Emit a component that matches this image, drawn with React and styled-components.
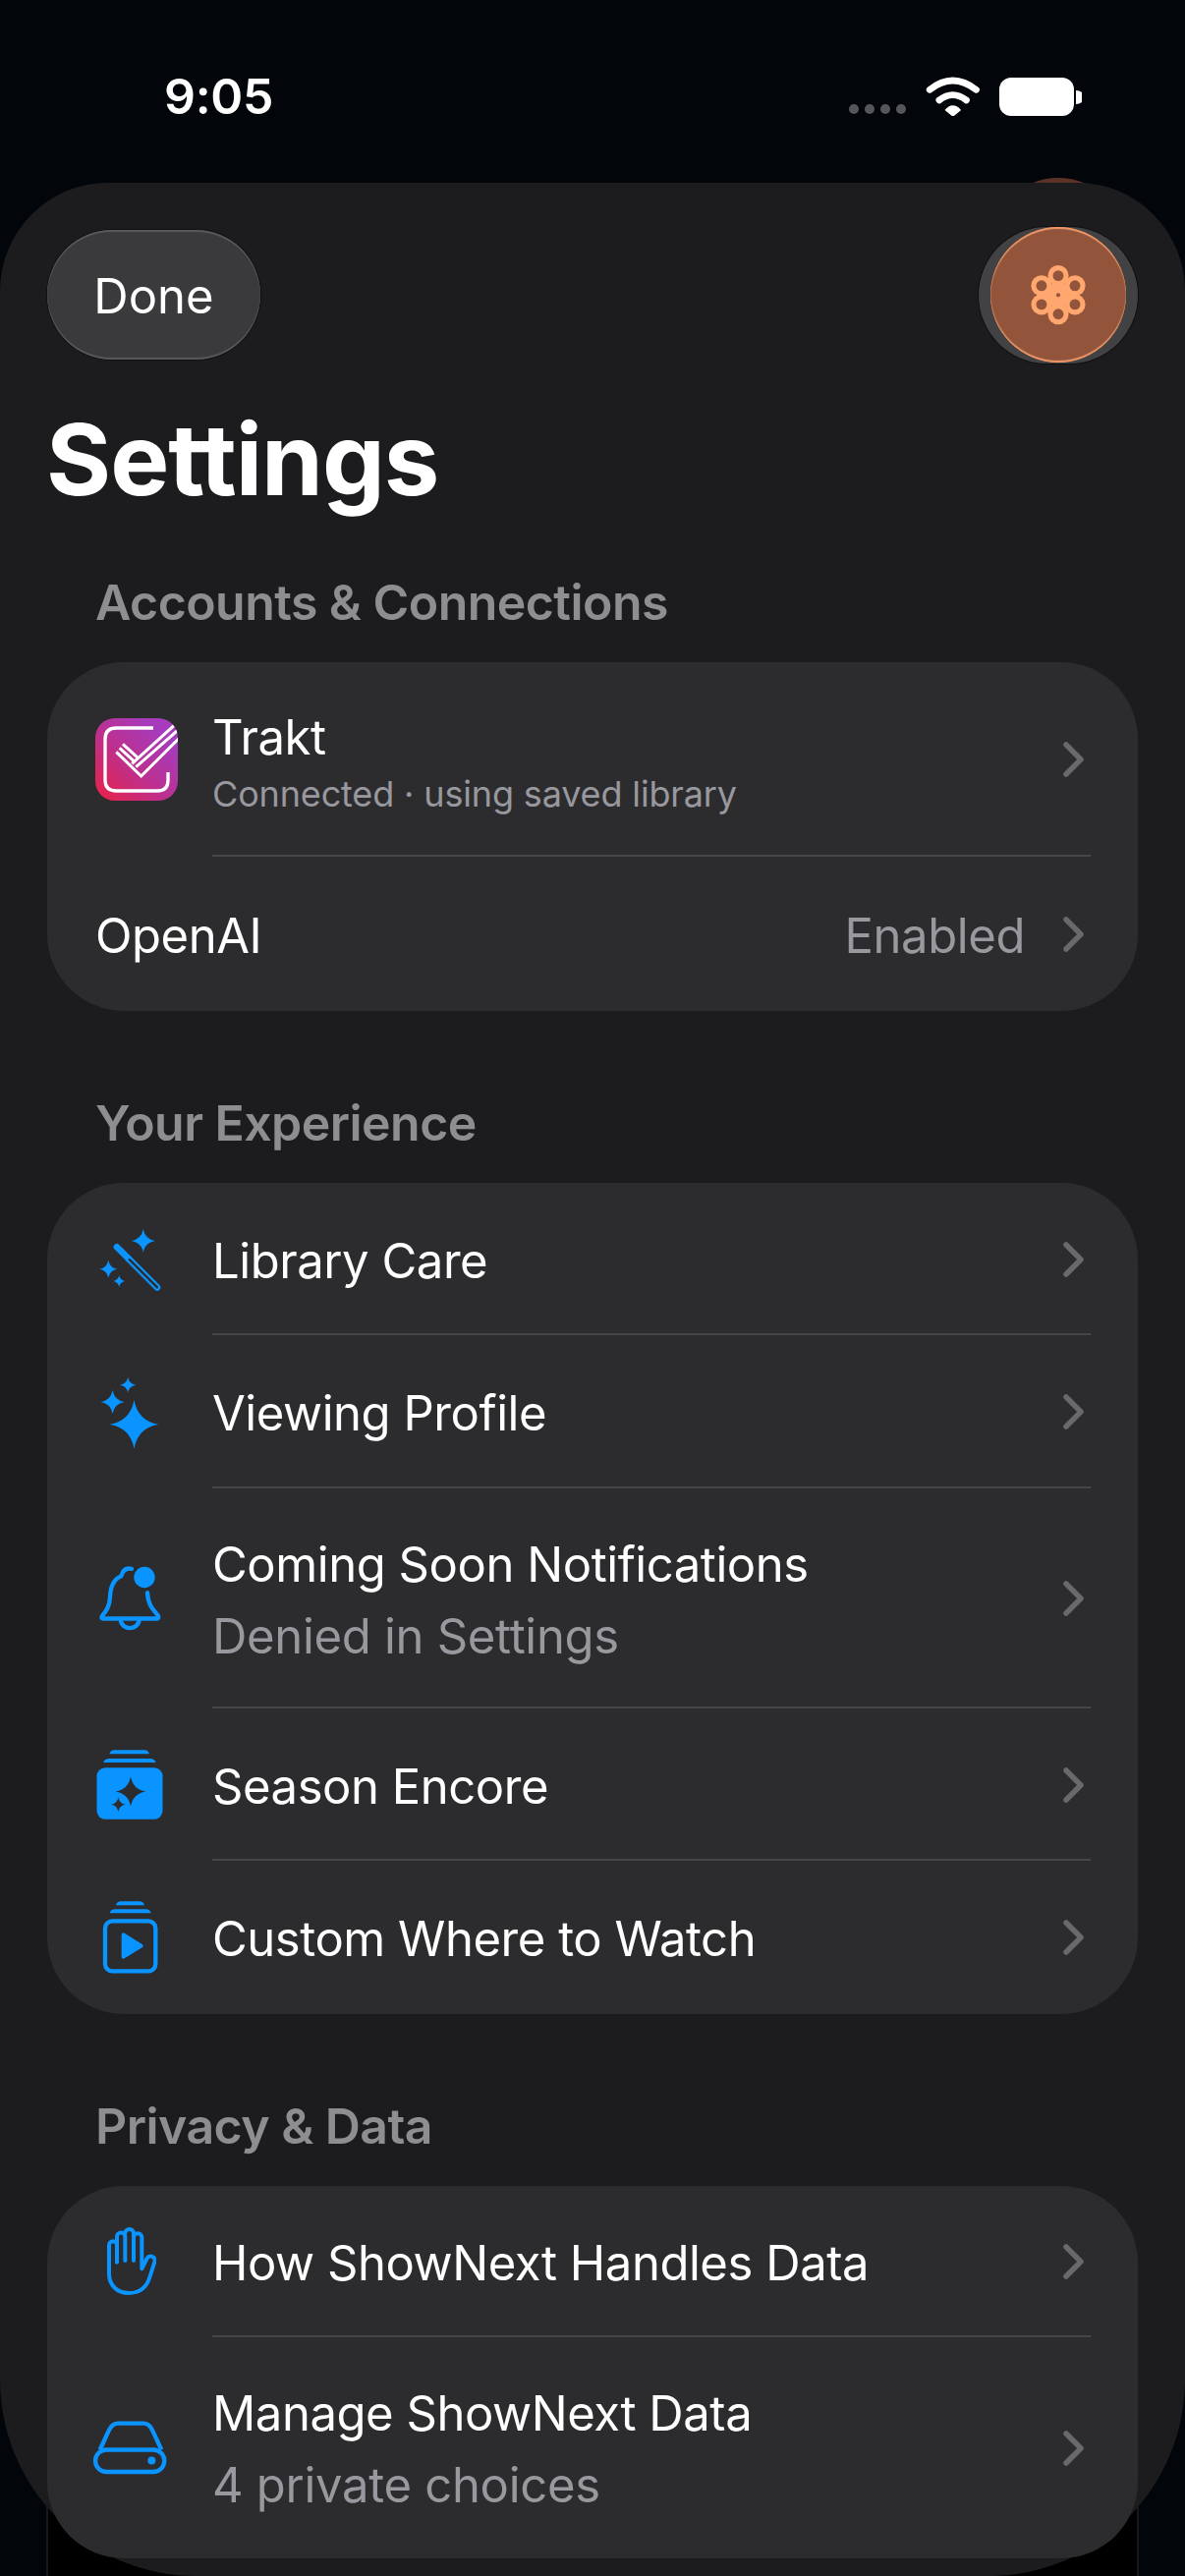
import React from 'react'
import styled, { createGlobalStyle } from 'styled-components'

const BLUE = '#0994ff'
const CARD = '#2c2c2e'

const GlobalStyle = createGlobalStyle`
  html, body {
    margin: 0;
    padding: 0;
    background: #02050a;
  }
  * { box-sizing: border-box; }
`

const Screen = styled.div`
  position: relative;
  width: 1206px;
  height: 2622px;
  overflow: hidden;
  background: #02050a;
  font-family: Inter, "Liberation Sans", sans-serif;
  color: #fff;
`

const BackdropPanel = styled.div`
  position: absolute;
  left: 47px;
  top: 2440px;
  width: 1112px;
  height: 182px;
  background: #000;
  border-left: 2px solid #17181b;
  border-right: 2px solid #17181b;
`

const BackdropAvatar = styled.div`
  position: absolute;
  left: 1008px;
  top: 181px;
  width: 138px;
  height: 138px;
  border-radius: 50%;
  background: #5c3226;
`

const StatusBar = styled.header`
  position: relative;
  display: flex;
  justify-content: space-between;
  height: 186px;
  padding: 68px 105px 0 167px;
`

const Time = styled.div`
  font-size: 50px;
  font-weight: 600;
  line-height: 60px;
  letter-spacing: -0.3px;
`

const StatusIcons = styled.div`
  display: flex;
  align-items: center;
  height: 60px;
  gap: 20px;
`

const Sheet = styled.main`
  position: relative;
  display: flex;
  flex-direction: column;
  height: 2436px;
  padding: 48px 48px 0;
  background: #1c1c1e;
  border-radius: 110px 110px 200px 200px;
`

const TopBar = styled.div`
  display: flex;
  align-items: center;
  justify-content: space-between;
  height: 132px;
`

const DoneButton = styled.button`
  width: 217px;
  height: 132px;
  padding: 2px 0 0;
  border: 0;
  border-radius: 66px;
  background: #3a3a3c;
  color: #fff;
  font-family: inherit;
  font-size: 49px;
  box-shadow: 0 0 0 1px #101012, inset 0 2px 1px #59595b, inset 0 -2px 1px #59595b;
`

const AvatarPill = styled.div`
  display: flex;
  align-items: center;
  justify-content: center;
  width: 162px;
  height: 139px;
  border-radius: 70px;
  background: #424245;
  box-shadow: 0 0 0 1px #101012;
`

const AvatarCircle = styled.div`
  display: flex;
  align-items: center;
  justify-content: center;
  flex-shrink: 0;
  width: 138px;
  height: 138px;
  border-radius: 50%;
  background: #92553c;
  box-shadow: inset 0 2px 1px #f09a68, inset 0 -2px 1px #f09a68;
`

const Title = styled.h1`
  margin: 41px 0 57px -1px;
  font-size: 101px;
  font-weight: 700;
  line-height: 120px;
  letter-spacing: -1px;
`

const Section = styled.section`
  display: flex;
  flex-direction: column;
  margin-bottom: 85px;
`

const SectionLabel = styled.h2`
  margin: -1px 0 31px;
  padding-left: 49px;
  color: #8d8d92;
  font-size: 50px;
  font-weight: 600;
  line-height: 60px;
  letter-spacing: -0.55px;
`

const Card = styled.div`
  display: flex;
  flex-direction: column;
  border-radius: 78px;
  background: ${CARD};
`

const Row = styled.div`
  display: flex;
  align-items: stretch;
  height: ${p => p.$h}px;
  padding-left: 49px;
`

const IconSlot = styled.div`
  display: flex;
  align-items: center;
  justify-content: ${p => (p.$start ? 'flex-start' : 'center')};
  flex-shrink: 0;
  width: 70px;
  margin-right: 49px;
  svg { flex-shrink: 0; }
`

const RowBody = styled.div`
  display: flex;
  flex: 1;
  align-items: center;
  justify-content: space-between;
  padding-right: 7px;
  margin-right: 48px;
  box-shadow: ${p => (p.$last ? 'none' : 'inset 0 -2px 0 #464648')};
`

const RowText = styled.div`
  display: flex;
  flex-direction: column;
  gap: ${p => (p.$compact ? '5px' : '13px')};
  padding-top: 4px;
`

const RowTitle = styled.div`
  font-size: 49px;
  line-height: 60px;
  letter-spacing: -0.45px;
`

const RowSub = styled.div`
  color: #98989e;
  font-size: ${p => (p.$compact ? '36px' : '49px')};
  line-height: ${p => (p.$compact ? '44px' : '60px')};
  letter-spacing: ${p => (p.$compact ? '-0.15px' : '-0.3px')};
`

const RowEnd = styled.div`
  display: flex;
  align-items: center;
  gap: 39px;
`

const RowValue = styled.span`
  padding-top: 4px;
  color: #98989e;
  font-size: 49px;
  letter-spacing: -0.4px;
`

const sparkle = (x, y, r) => {
  const c = r * 0.15
  return `M${x} ${y - r}Q${x + c} ${y - c} ${x + r} ${y}Q${x + c} ${y + c} ${x} ${y + r}Q${x - c} ${y + c} ${x - r} ${y}Q${x - c} ${y - c} ${x} ${y - r}Z`
}

const Chevron = () => (
  <svg width="21" height="36" viewBox="0 0 21 36" fill="none">
    <path d="M3 3l15 15L3 33" stroke="#69696c" strokeWidth="5.5" strokeLinecap="round" strokeLinejoin="round" />
  </svg>
)

const Dots = () => (
  <svg width="58" height="10" viewBox="0 0 58 10" style={{ marginTop: 26 }}>
    {[5, 21, 37, 53].map(x => <circle key={x} cx={x} cy="5" r="5" fill="#55565a" />)}
  </svg>
)

const Wifi = () => (
  <svg width="55" height="40" viewBox="363 112 164 120" fill="none" stroke="#fff" strokeLinecap="round">
    <path d="M375 152Q445 96 517 152" strokeWidth="20" />
    <path d="M404 184Q445 152 487 184" strokeWidth="20" />
    <path d="M424 214Q445 190 468 214L446 232Z" fill="#fff" stroke="#fff" strokeWidth="4" strokeLinejoin="round" />
  </svg>
)

const Battery = () => (
  <svg width="84" height="39" viewBox="0 0 84 39">
    <rect x="0" y="0" width="76" height="39" rx="12" fill="#fff" />
    <path d="M78 13a8 6.5 0 0 1 0 14Z" fill="#fff" />
  </svg>
)

const Flower = () => (
  <svg width="58" height="62" viewBox="296 328 170 182">
    <g fill="#ffa76e">
      <circle cx="381" cy="362" r="31" />
      <circle cx="331" cy="392" r="31" />
      <circle cx="431" cy="392" r="31" />
      <circle cx="331" cy="448" r="31" />
      <circle cx="431" cy="448" r="31" />
      <circle cx="381" cy="477" r="31" />
      <circle cx="381" cy="420" r="38" />
    </g>
    <g fill="#92553c">
      <circle cx="381" cy="362" r="16" />
      <circle cx="331" cy="392" r="16" />
      <circle cx="431" cy="392" r="16" />
      <circle cx="331" cy="448" r="16" />
      <circle cx="431" cy="448" r="16" />
      <circle cx="381" cy="477" r="16" />
      <circle cx="381" cy="420" r="6" />
    </g>
  </svg>
)

const TraktLogo = () => (
  <svg width="84" height="84" viewBox="108 93 252 252" fill="none">
    <defs>
      <linearGradient id="traktBg" x1="0" y1="1" x2="1" y2="0">
        <stop offset="0" stopColor="#ea2144" />
        <stop offset="0.45" stopColor="#bc3090" />
        <stop offset="0.8" stopColor="#a63bbb" />
      </linearGradient>
      <clipPath id="traktClip">
        <rect x="108" y="93" width="252" height="252" rx="60" />
      </clipPath>
    </defs>
    <rect x="108" y="93" width="252" height="252" rx="60" fill="url(#traktBg)" />
    <g clipPath="url(#traktClip)" stroke="#fff">
      <path d="M285 123H172Q138 123 138 157V282Q138 315 172 315H298Q330 315 330 282V258" strokeWidth="10" />
      <path d="M172 196L248 270L362 156" strokeWidth="9" />
      <path d="M232 242L362 128" strokeWidth="9" />
      <path d="M220 232L352 112" strokeWidth="9" />
      <path d="M192 172L238 214" strokeWidth="9" />
      <path d="M182 184L228 226" strokeWidth="9" />
    </g>
  </svg>
)

const WandIcon = () => (
  <svg width="67" height="68" viewBox="80 50 200 205" fill="none">
    <path d={sparkle(220, 95, 36)} fill={BLUE} />
    <path d={sparkle(113, 182, 27)} fill={BLUE} />
    <path d={sparkle(146, 219, 18)} fill={BLUE} />
    <path d="M139 114L176 151" stroke={BLUE} strokeWidth="20" strokeLinecap="round" />
    <path d="M174 149L263 238" stroke={BLUE} strokeWidth="20" strokeLinecap="round" />
    <path d="M178 153L263 238" stroke={CARD} strokeWidth="7" strokeLinecap="round" />
  </svg>
)

const SparklesIcon = () => (
  <svg width="63" height="77" viewBox="90 505 190 230">
    <path d={sparkle(178, 536, 24)} fill={BLUE} />
    <path d={sparkle(131, 588, 36)} fill={BLUE} />
    <path d={sparkle(197, 657, 75)} fill={BLUE} />
  </svg>
)

const BellIcon = () => (
  <svg width="65" height="71" viewBox="90 10 195 212" fill="none" stroke={BLUE} strokeWidth="13" strokeLinecap="round" strokeLinejoin="round">
    <path d="M192 24C176 20 165 28 160 46C135 56 127 85 126 110C125 140 112 155 102 168C98 175 102 176 108 176H268C274 176 276 172 272 166C258 150 242 135 240 97" />
    <path d="M158 182A29 28 0 0 0 215 182" />
    <circle cx="231" cy="50" r="32" fill={BLUE} stroke="none" />
  </svg>
)

const EncoreIcon = () => (
  <svg width="68" height="71" viewBox="85 567 204 214">
    <path d="M125 580Q128 568 140 568H232Q244 568 247 580Z" fill={BLUE} />
    <path d="M106 606Q110 594 124 594H250Q263 594 267 606Z" fill={BLUE} />
    <rect x="86" y="622" width="202" height="158" rx="26" fill={BLUE} />
    <path d={sparkle(190, 695, 46)} fill={CARD} />
    <path d={sparkle(152, 735, 22)} fill={CARD} />
  </svg>
)

const WatchIcon = () => (
  <svg width="60" height="76" viewBox="95 40 180 228" fill="none">
    <path d="M143 56Q146 44 158 44H215Q227 44 230 56Z" fill={BLUE} />
    <path d="M124 80Q127 68 140 68H234Q247 68 250 80Z" fill={BLUE} />
    <rect x="110" y="104" width="154" height="153" rx="22" stroke={BLUE} strokeWidth="13" />
    <path d="M166 146L220 180L166 213Z" fill={BLUE} stroke={BLUE} strokeWidth="12" strokeLinejoin="round" />
  </svg>
)

const HandIcon = () => (
  <svg width="54" height="72" viewBox="106 200 162 216" fill="none" stroke={BLUE} strokeWidth="12" strokeLinecap="round" strokeLinejoin="round">
    <path d="M124 345V258A12 12 0 0 1 148 258" />
    <path d="M148 310V232A12.5 12.5 0 0 1 173 232V305" />
    <path d="M173 222A13 13 0 0 1 199 222V305" />
    <path d="M199 234A12.5 12.5 0 0 1 224 234V330L240 298A13 13 0 0 1 264 306L248 356C238 388 215 404 184 404C148 404 124 380 124 345" />
  </svg>
)

const DiskIcon = () => (
  <svg width="78" height="57" viewBox="280 130 235 172" fill="none" stroke={BLUE} strokeWidth="13" strokeLinejoin="round">
    <rect x="292" y="222" width="212" height="68" rx="34" />
    <path d="M306 222L335 160Q345 141 362 141H440Q456 141 466 160L495 222" />
    <circle cx="465" cy="255" r="12" fill={BLUE} stroke="none" />
  </svg>
)

const SettingsRow = ({ h, icon, start, title, sub, compact, value, last }) => (
  <Row $h={h}>
    {icon && <IconSlot $start={start}>{icon}</IconSlot>}
    <RowBody $last={last}>
      <RowText $compact={compact}>
        <RowTitle>{title}</RowTitle>
        {sub && <RowSub $compact={compact}>{sub}</RowSub>}
      </RowText>
      <RowEnd>
        {value && <RowValue>{value}</RowValue>}
        <Chevron />
      </RowEnd>
    </RowBody>
  </Row>
)

const App = () => (
  <Screen>
    <GlobalStyle />
    <BackdropPanel />
    <BackdropAvatar />
    <StatusBar>
      <Time>9:05</Time>
      <StatusIcons>
        <Dots />
        <Wifi />
        <Battery />
      </StatusIcons>
    </StatusBar>
    <Sheet>
      <TopBar>
        <DoneButton>Done</DoneButton>
        <AvatarPill>
          <AvatarCircle>
            <Flower />
          </AvatarCircle>
        </AvatarPill>
      </TopBar>
      <Title>Settings</Title>

      <Section>
        <SectionLabel>Accounts &amp; Connections</SectionLabel>
        <Card>
          <SettingsRow h={198} icon={<TraktLogo />} start title="Trakt" sub="Connected · using saved library" compact />
          <SettingsRow h={157} title="OpenAI" value="Enabled" last />
        </Card>
      </Section>

      <Section>
        <SectionLabel>Your Experience</SectionLabel>
        <Card>
          <SettingsRow h={155} icon={<WandIcon />} title="Library Care" />
          <SettingsRow h={156} icon={<SparklesIcon />} title="Viewing Profile" />
          <SettingsRow h={224} icon={<BellIcon />} title="Coming Soon Notifications" sub="Denied in Settings" />
          <SettingsRow h={155} icon={<EncoreIcon />} title="Season Encore" />
          <SettingsRow h={156} icon={<WatchIcon />} title="Custom Where to Watch" last />
        </Card>
      </Section>

      <Section>
        <SectionLabel>Privacy &amp; Data</SectionLabel>
        <Card>
          <SettingsRow h={154} icon={<HandIcon />} title="How ShowNext Handles Data" />
          <SettingsRow h={225} icon={<DiskIcon />} title="Manage ShowNext Data" sub="4 private choices" last />
        </Card>
      </Section>
    </Sheet>
  </Screen>
)

export default App
